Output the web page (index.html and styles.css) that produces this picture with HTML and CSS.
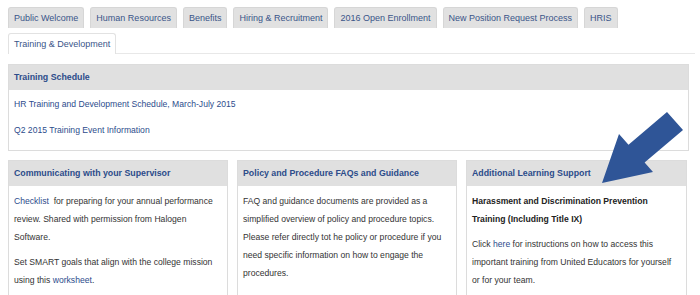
FILE: index.html
```html
<!DOCTYPE html>
<html>
<head>
<meta charset="utf-8">
<link rel="stylesheet" href="styles.css">
</head>
<body>
<div class="page">
  <nav class="tabs">
    <div class="tab-row">
      <a class="tab">Public Welcome</a>
      <a class="tab">Human Resources</a>
      <a class="tab">Benefits</a>
      <a class="tab">Hiring &amp; Recruitment</a>
      <a class="tab">2016 Open Enrollment</a>
      <a class="tab">New Position Request Process</a>
      <a class="tab">HRIS</a>
    </div>
    <div class="tab-row">
      <a class="tab active">Training &amp; Development</a>
    </div>
  </nav>

  <section class="panel wide">
    <h3 class="panel-head">Training Schedule</h3>
    <div class="panel-body">
      <p><a class="link">HR Training and Development Schedule, March-July 2015</a></p>
      <p><a class="link">Q2 2015 Training Event Information</a></p>
    </div>
  </section>

  <div class="columns">
    <section class="panel">
      <h3 class="panel-head">Communicating with your Supervisor</h3>
      <div class="panel-body">
        <p><a class="link">Checklist</a>&nbsp; for preparing for your annual performance review. Shared with permission from Halogen Software.</p>
        <p>Set SMART goals that align with the college mission using this <a class="link">worksheet</a>.</p>
      </div>
    </section>
    <section class="panel">
      <h3 class="panel-head">Policy and Procedure FAQs and Guidance</h3>
      <div class="panel-body">
        <p>FAQ and guidance documents are provided as a simplified overview of policy and procedure topics. Please refer directly tot he policy or procedure if you need specific information on how to engage the procedures.</p>
      </div>
    </section>
    <section class="panel">
      <h3 class="panel-head">Additional Learning Support</h3>
      <div class="panel-body">
        <p class="strong">Harassment and Discrimination Prevention Training (Including Title IX)</p>
        <p>Click <a class="link">here</a> for instructions on how to access this important training from United Educators for yourself or for your team.</p>
      </div>
    </section>
  </div>

  <svg class="arrow" width="700" height="295" viewBox="0 0 700 295">
    <polygon points="667,112 683,130 644.6,162.6 653,172 602,183 619,134 628.5,144.7" fill="#2f5597"/>
  </svg>
</div>
</body>
</html>
```

FILE: styles.css
```css
* { box-sizing: border-box; }
html, body { margin: 0; padding: 0; background: #fff; }
body {
  font-family: "Liberation Sans", Arial, Helvetica, sans-serif;
  font-size: 9px;
  color: #333;
  width: 700px;
  height: 295px;
  overflow: hidden;
}
.page {
  position: relative;
  height: 295px;
  overflow: hidden;
  padding: 7px 5px 0 8px;
}
.tabs {
  display: flex;
  flex-direction: column;
  gap: 5px;
  border-bottom: 1px solid #e8e8e8;
}
.tab-row {
  display: flex;
  gap: 6px;
}
.tab {
  display: block;
  height: 21px;
  line-height: 21px;
  padding: 0 5px;
  background: #e1e1e1;
  border: 1px solid #d6d6d6;
  border-bottom: none;
  border-radius: 3px 3px 0 0;
  color: #3a5589;
  white-space: nowrap;
}
.tab.active {
  background: #fff;
  border-color: #e2e2e2;
  height: 21px;
  margin-bottom: -1px;
}
.panel {
  border: 1px solid #dcdcdc;
  background: #fff;
}
.wide {
  margin-top: 10px;
  width: 681px;
}
.panel-head {
  margin: 0;
  height: 25px;
  line-height: 25px;
  padding: 0 5px;
  background: #e0e0e0;
  color: #2c4c8a;
  font-size: 8.8px;
  font-weight: bold;
}
.panel-body {
  padding: 5px 5px 10px;
  font-size: 8.6px;
}
.panel-body p {
  margin: 0 0 7px;
  line-height: 19px;
}
.panel-body p:last-child { margin-bottom: 0; }
.link { color: #2c4c8c; }
.columns {
  display: grid;
  grid-template-columns: 220px 220px 221px;
  gap: 9px;
  margin-top: 9px;
}
.columns .panel { height: 145px; }
.columns .panel-body { padding: 6px 5px; }
.columns .panel-body p { line-height: 18px; margin-bottom: 7px; }
.strong { font-weight: bold; color: #222; }
.arrow {
  position: absolute;
  left: 0;
  top: 0;
  pointer-events: none;
}
```
